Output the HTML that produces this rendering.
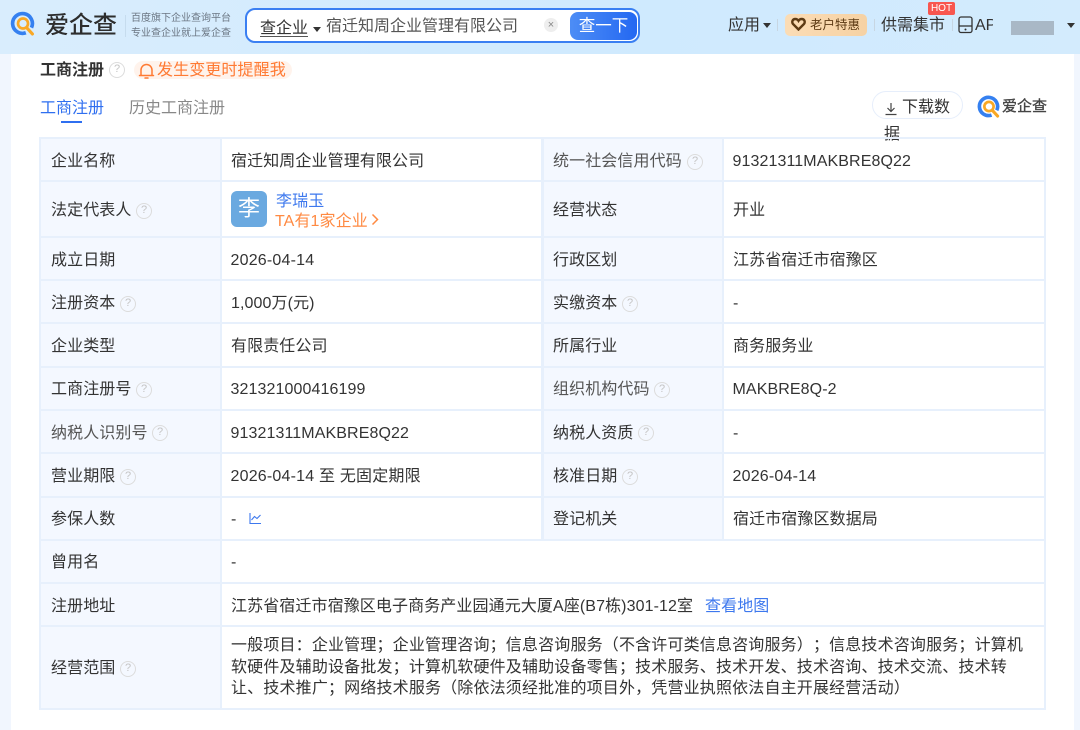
<!DOCTYPE html>
<html lang="zh"><head><meta charset="utf-8">
<style>
html,body{margin:0;padding:0;width:1080px;height:730px;overflow:hidden;background:#f1f6fe}
body{font-family:"Liberation Sans","Noto Sans CJK SC",sans-serif;color:#333;font-size:16px;text-spacing-trim:space-all}
#p{position:relative;width:1080px;height:730px;overflow:hidden;filter:blur(.35px)}
.a{position:absolute;white-space:nowrap}
.t{line-height:22px;height:22px}
.l{background:#f4f8ff}
.h{position:absolute;left:40px;width:1005px;height:2px;background:#e7f0fc}
.v{position:absolute;width:3px;background:#e7f0fc}
.q{position:absolute;width:16px;height:16px;border:1.4px solid #dcdcdc;border-radius:50%;box-sizing:border-box;color:#c4c4c4;font-size:11px;line-height:13.5px;text-align:center}
#w .q{margin-top:-2px}
#w .t{letter-spacing:.1px}
#w .t.d{letter-spacing:.2px}
.g{color:#555}
</style></head><body><div id="p">
<div class="a" style="left:0;top:0;width:1080px;height:54px;background:linear-gradient(90deg,#d9edfd,#cfeafe 60%,#d3ebfd)"></div>
<div class="a" style="left:11px;top:54px;width:1063px;height:676px;background:#fff"></div>

<svg class="a" style="left:10px;top:11px" width="25" height="25" viewBox="0 0 24 24"><path d="M15.200 20.900A9.500 9.500 0 1 1 20.600 16" fill="none" stroke="#3580f0" stroke-width="3.500"/><circle cx="12.500" cy="12" r="4.800" fill="none" stroke="#f9a825" stroke-width="2.600"/><path d="M16 16l5.500 6" stroke="#f9a825" stroke-width="3" stroke-linecap="round"/></svg>
<div class="a" style="left:45px;top:9px;font-size:24px;line-height:34px;color:#2d2d2d;font-weight:500">爱企查</div>
<div class="a" style="left:125px;top:15px;width:1px;height:22px;background:#c6dcee"></div>
<div class="a" style="left:131px;top:12px;font-size:10px;line-height:14.500px;color:#6b7683">百度旗下企业查询平台<br>专业查企业就上爱企查</div>

<div class="a" style="left:245px;top:8px;width:391px;height:31px;border:2px solid #3a7ff2;border-radius:10px;background:#fff"></div>
<div class="a t" style="left:260px;top:18px;color:#333">查企业</div>
<div class="a" style="left:260px;top:36px;width:48px;height:1px;background:#555"></div>
<div class="a" style="left:313px;top:27px;width:0;height:0;border:4px solid transparent;border-top:5px solid #333;border-bottom:0"></div>
<div class="a t" style="left:326px;top:16px;color:#555">宿迁知周企业管理有限公司</div>
<div class="a" style="left:544px;top:18px;width:14px;height:14px;border-radius:50%;background:#eee;color:#888;font-size:11px;line-height:14px;text-align:center">×</div>
<div class="a" style="left:570px;top:12px;width:67px;height:28px;border-radius:8px;background:linear-gradient(90deg,#4d8df5,#2468f2);color:#fff;text-align:center;line-height:28px;font-size:16.500px">查一下</div>

<div class="a t" style="left:728px;top:15px;color:#333">应用</div>
<div class="a" style="left:763px;top:23px;width:0;height:0;border:4px solid transparent;border-top:5px solid #333;border-bottom:0"></div>
<div class="a" style="left:777px;top:19px;width:1px;height:12px;background:#c7d6e2"></div>
<div class="a" style="left:785px;top:14px;width:82px;height:22px;border-radius:5px;background:linear-gradient(90deg,#fbdcb5,#f6d2a4)"></div>
<svg class="a" style="left:791px;top:17px" width="15" height="14" viewBox="0 0 15 14"><path d="M7.500 12.500L2 7C.5 5 1.500 2 4.300 2 6 2 7 3 7.500 3.800 8 3 9 2 10.700 2 13.500 2 14.500 5 13 7z" fill="none" stroke="#5c3a14" stroke-width="2.400"/></svg>
<div class="a" style="left:810px;top:17px;font-size:12.500px;line-height:17px;color:#5c3a14">老户特惠</div>
<div class="a" style="left:874px;top:19px;width:1px;height:12px;background:#c7d6e2"></div>
<div class="a t" style="left:881px;top:15px;color:#333">供需集市</div>
<div class="a" style="left:928px;top:2px;width:27px;height:13px;border-radius:2px;background:#f8564f;color:#fff;font-size:10px;line-height:13px;text-align:center">HOT</div>
<div class="a" style="left:952px;top:19px;width:1px;height:12px;background:#c7d6e2"></div>
<svg class="a" style="left:958px;top:16px" width="16" height="18" viewBox="0 0 16 18"><rect x="1" y="1" width="13" height="15.500" rx="2" fill="none" stroke="#333" stroke-width="1.300"/><path d="M1 10h13" stroke="#333" stroke-width="1.300"/><circle cx="7.500" cy="13.500" r="1" fill="#333"/></svg>
<div class="a t" style="left:975px;top:15px;width:18px;overflow:hidden;color:#333">APP</div>
<div class="a" style="left:1011px;top:21px;width:43px;height:14px;background:#a9b8c6"></div>
<div class="a" style="left:1067px;top:23px;width:0;height:0;border:4px solid transparent;border-top:5px solid #333;border-bottom:0"></div>

<div class="a t" style="left:40px;top:60px;font-weight:bold;font-size:16px;color:#333">工商注册</div>
<div class="q" style="left:109px;top:62px">?</div>
<div class="a" style="left:134px;top:61px;width:158px;height:18px;background:#fff3ec;border-radius:9px"></div>
<svg class="a" style="left:138px;top:62px" width="17" height="18" viewBox="0 0 17 18"><path d="M3 13V8a5.500 5.500 0 0 1 11 0v5M1.500 13.500h14M7 16h3" fill="none" stroke="#ff7a33" stroke-width="1.500" stroke-linecap="round"/></svg>
<div class="a t" style="left:157px;top:60px;color:#ff7a33;letter-spacing:.1px">发生变更时提醒我</div>

<div class="a t" style="left:40px;top:98px;color:#2f6ff0">工商注册</div>
<div class="a" style="left:61px;top:121px;width:21px;height:2px;background:#2f6ff0"></div>
<div class="a t" style="left:129px;top:98px;color:#888">历史工商注册</div>

<div class="a" style="left:872px;top:91px;width:91px;height:28px;border:1.500px solid #e6eefb;border-radius:14px;box-sizing:border-box;background:#fff"></div>
<svg class="a" style="left:884px;top:102px" width="14" height="14" viewBox="0 0 14 14"><path d="M7 1v8M3.500 6l3.500 3.500L10.500 6M1.500 12.500h11" fill="none" stroke="#444" stroke-width="1.200"/></svg>
<div class="a t" style="left:902px;top:97px;color:#333">下载数</div>
<div class="a t" style="left:884px;top:124px;color:#333">据</div>
<svg class="a" style="left:977px;top:95px" width="23" height="23" viewBox="0 0 24 24"><path d="M15.200 20.900A9.500 9.500 0 1 1 20.600 16" fill="none" stroke="#3580f0" stroke-width="3.800"/><circle cx="12.500" cy="12" r="4.800" fill="none" stroke="#f9a825" stroke-width="2.800"/><path d="M16 16l5.500 6" stroke="#f9a825" stroke-width="3.200" stroke-linecap="round"/></svg>
<div class="a t" style="left:1002px;top:96px;font-size:15px;color:#444;-webkit-text-stroke:.35px #444">爱企查</div>

<!-- table backgrounds -->
<div class="a l" style="left:40px;top:138px;width:181px;height:571px"></div>
<div class="a l" style="left:542px;top:138px;width:181px;height:402px"></div>
<div class="h" style="top:137px"></div><div class="h" style="top:180px"></div><div class="h" style="top:236px"></div><div class="h" style="top:279px"></div><div class="h" style="top:322px"></div><div class="h" style="top:366px"></div><div class="h" style="top:409px"></div><div class="h" style="top:452px"></div><div class="h" style="top:496px"></div><div class="h" style="top:539px"></div><div class="h" style="top:582px"></div><div class="h" style="top:625px"></div><div class="h" style="top:708px"></div>
<div class="v" style="left:39px;top:137px;height:573px;width:2px"></div>
<div class="v" style="left:220px;top:137px;height:573px;width:2px"></div>
<div class="v" style="left:541px;top:137px;height:403px;width:3px"></div>
<div class="v" style="left:722px;top:137px;height:403px;width:2px"></div>
<div class="v" style="left:1044px;top:137px;height:573px;width:2px"></div>

<div id="w" class="a" style="left:0;top:2px;width:1080px;height:728px">
<!-- left labels -->
<div class="a t" style="left:51px;top:149px">企业名称</div>
<div class="a t" style="left:51px;top:198px">法定代表人</div><div class="q" style="left:136px;top:203px">?</div>
<div class="a t" style="left:51px;top:248px">成立日期</div>
<div class="a t" style="left:51px;top:291px">注册资本</div><div class="q" style="left:120px;top:296px">?</div>
<div class="a t" style="left:51px;top:334px">企业类型</div>
<div class="a t" style="left:51px;top:377px">工商注册号</div><div class="q" style="left:136px;top:382px">?</div>
<div class="a t g" style="left:51px;top:421px">纳税人识别号</div><div class="q" style="left:152px;top:425px">?</div>
<div class="a t" style="left:51px;top:464px">营业期限</div><div class="q" style="left:120px;top:469px">?</div>
<div class="a t" style="left:51px;top:507px">参保人数</div>
<div class="a t" style="left:51px;top:550px">曾用名</div>
<div class="a t" style="left:51px;top:594px">注册地址</div>
<div class="a t" style="left:51px;top:656px">经营范围</div><div class="q" style="left:120px;top:661px">?</div>

<!-- left values -->
<div class="a t" style="left:231px;top:149px">宿迁知周企业管理有限公司</div>
<div class="a" style="left:231px;top:189px;width:36px;height:36px;border-radius:6px;background:#6aa9e0;color:#fff;font-size:22px;line-height:36px;text-align:center">李</div>
<div class="a t" style="left:276px;top:189px;color:#3d78ee">李瑞玉</div>
<div class="a t" style="left:275px;top:209px;color:#ff8a42">TA有1家企业</div>
<svg class="a" style="left:371px;top:211px" width="8" height="13" viewBox="0 0 8 13"><path d="M1.500 1.500l5 5-5 5" fill="none" stroke="#ff8a42" stroke-width="1.500"/></svg>
<div class="a t d" style="left:230.500px;top:248px">2026-04-14</div>
<div class="a t" style="left:231px;top:291px">1,000万(元)</div>
<div class="a t" style="left:231px;top:334px">有限责任公司</div>
<div class="a t" style="left:230.500px;top:377px">321321000416199</div>
<div class="a t" style="left:230.500px;top:421px">91321311MAKBRE8Q22</div>
<div class="a t d" style="left:230.500px;top:464px">2026-04-14 至 无固定期限</div>
<div class="a t" style="left:231px;top:507px">-</div>
<svg class="a" style="left:249px;top:510px" width="13" height="13" viewBox="0 0 13 13"><path d="M1 1v10.500h11M2.500 8l3-3.500 2.500 2L11.500 3" fill="none" stroke="#3d78ee" stroke-width="1.100"/></svg>
<div class="a t" style="left:231px;top:550px">-</div>
<div class="a t" style="left:231px;top:594px">江苏省宿迁市宿豫区电子商务产业园通元大厦A座(B7栋)301-12室</div>
<div class="a t" style="left:705px;top:594px;color:#3d78ee">查看地图</div>
<div class="a" style="left:231px;top:633px;line-height:21.500px;color:#333;font-kerning:none;letter-spacing:.165px">一般项目：企业管理；企业管理咨询；信息咨询服务（不含许可类信息咨询服务）；信息技术咨询服务；计算机<br>软硬件及辅助设备批发；计算机软硬件及辅助设备零售；技术服务、技术开发、技术咨询、技术交流、技术转<br>让、技术推广；网络技术服务（除依法须经批准的项目外，凭营业执照依法自主开展经营活动）</div>

<!-- right labels -->
<div class="a t g" style="left:553px;top:149px">统一社会信用代码</div><div class="q" style="left:687px;top:154px">?</div>
<div class="a t" style="left:553px;top:198px">经营状态</div>
<div class="a t" style="left:553px;top:248px">行政区划</div>
<div class="a t" style="left:553px;top:291px">实缴资本</div><div class="q" style="left:622px;top:296px">?</div>
<div class="a t" style="left:553px;top:334px">所属行业</div>
<div class="a t g" style="left:553px;top:377px">组织机构代码</div><div class="q" style="left:654px;top:382px">?</div>
<div class="a t" style="left:553px;top:421px">纳税人资质</div><div class="q" style="left:638px;top:425px">?</div>
<div class="a t" style="left:553px;top:464px">核准日期</div><div class="q" style="left:622px;top:469px">?</div>
<div class="a t" style="left:553px;top:507px">登记机关</div>

<!-- right values -->
<div class="a t" style="left:732.500px;top:149px">91321311MAKBRE8Q22</div>
<div class="a t" style="left:733px;top:198px">开业</div>
<div class="a t" style="left:733px;top:248px">江苏省宿迁市宿豫区</div>
<div class="a t" style="left:733px;top:291px">-</div>
<div class="a t" style="left:733px;top:334px">商务服务业</div>
<div class="a t" style="left:732.500px;top:377px">MAKBRE8Q-2</div>
<div class="a t" style="left:733px;top:421px">-</div>
<div class="a t d" style="left:732.500px;top:464px">2026-04-14</div>
<div class="a t" style="left:733px;top:507px">宿迁市宿豫区数据局</div>
</div>
</div></body></html>
